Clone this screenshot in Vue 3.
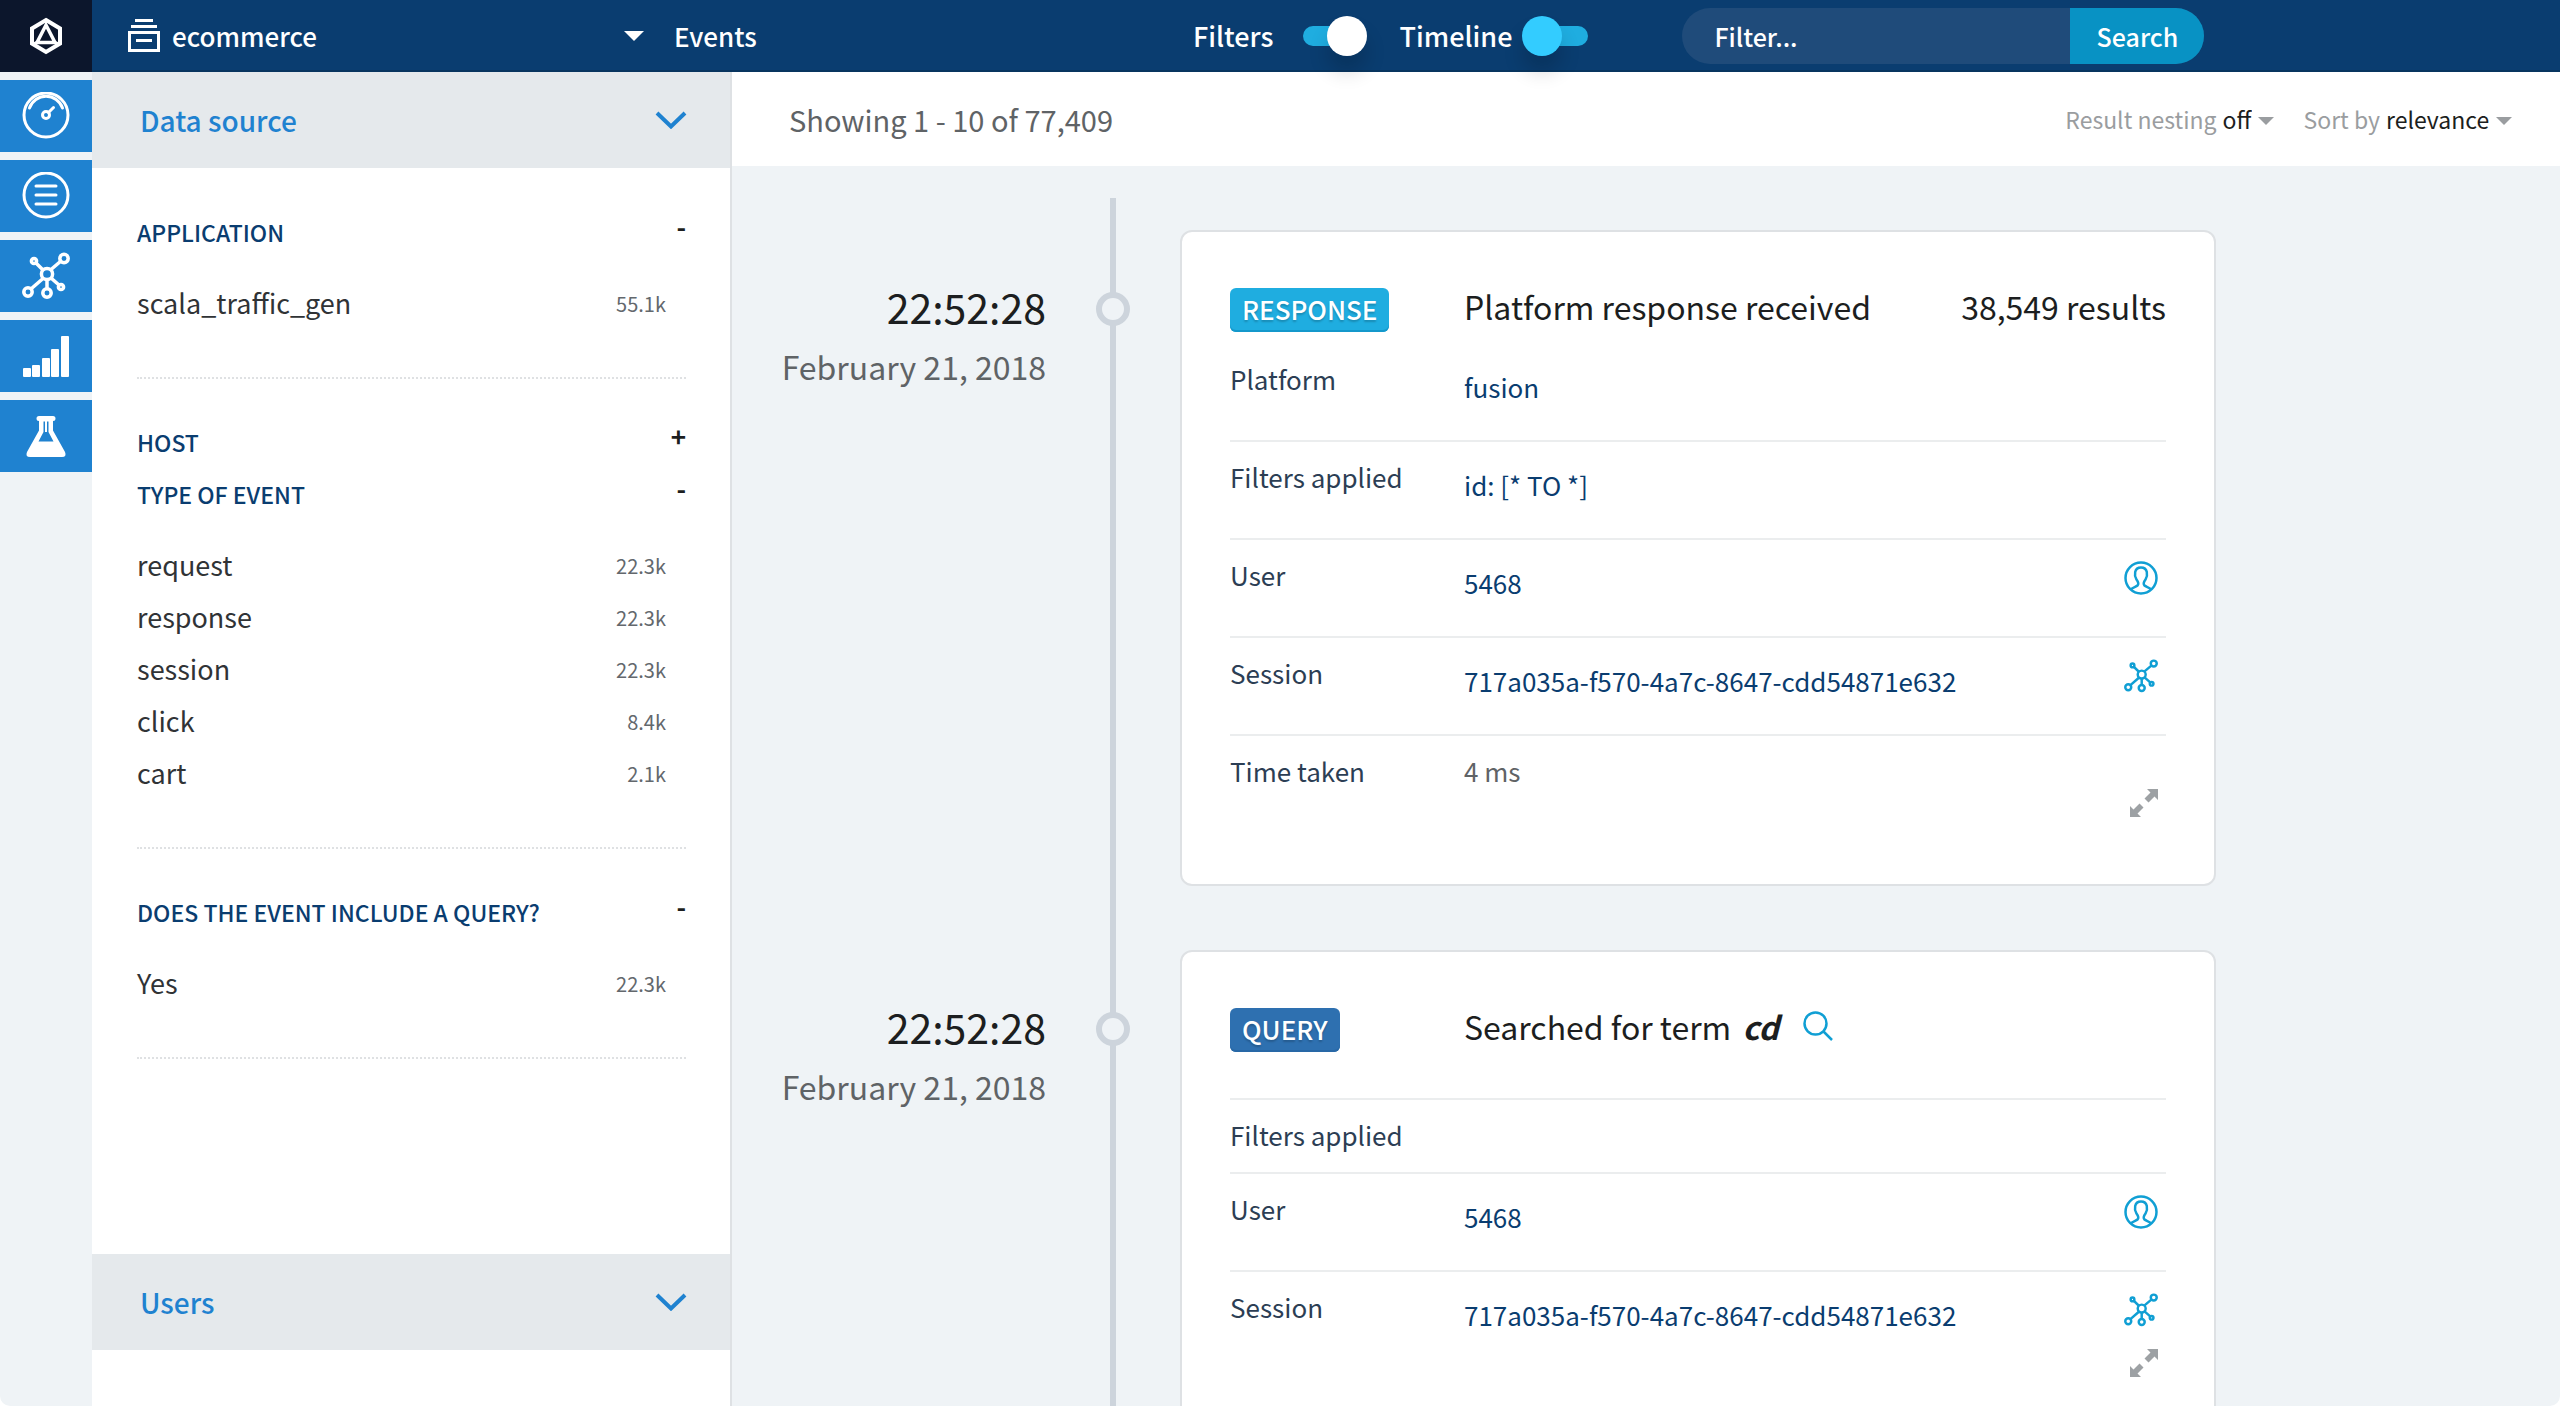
<script setup>
import { ref } from 'vue'

const showFilters = ref(true)
const showTimeline = ref(false)
const filterText = ref('')

const facetGroups = [
  {
    facets: [
      { name: 'Application', open: true, items: [{ label: 'scala_traffic_gen', count: '55.1k' }] },
    ],
  },
  {
    facets: [
      { name: 'Host', open: false, items: [] },
      {
        name: 'Type of event',
        open: true,
        items: [
          { label: 'request', count: '22.3k' },
          { label: 'response', count: '22.3k' },
          { label: 'session', count: '22.3k' },
          { label: 'click', count: '8.4k' },
          { label: 'cart', count: '2.1k' },
        ],
      },
    ],
  },
  {
    facets: [
      { name: 'Does the event include a query?', open: true, items: [{ label: 'Yes', count: '22.3k' }] },
    ],
  },
]

const session = '717a035a-f570-4a7c-8647-cdd54871e632'

const events = [
  {
    id: 1,
    kind: 'response',
    time: '22:52:28',
    date: 'February 21, 2018',
    title: 'Platform response received',
    results: '38,549 results',
    rows: [
      { label: 'Platform', link: 'fusion' },
      { label: 'Filters applied', link: 'id: [* TO *]' },
      { label: 'User', link: '5468', icon: 'user' },
      { label: 'Session', link: session, icon: 'graph' },
      { label: 'Time taken', text: '4 ms' },
    ],
  },
  {
    id: 2,
    kind: 'query',
    time: '22:52:28',
    date: 'February 21, 2018',
    title: 'Searched for term',
    term: 'cd',
    rows: [
      { label: 'Filters applied' },
      { label: 'User', link: '5468', icon: 'user' },
      { label: 'Session', link: session, icon: 'graph' },
    ],
  },
]
</script>

<template>
  <div class="shell">
    <svg class="defs" aria-hidden="true">
      <symbol id="graph" viewBox="0 2 48 48">
        <g fill="none" stroke="currentColor" stroke-width="3.500">
          <circle cx="25" cy="24" r="5.6" />
          <circle cx="12" cy="11" r="2.600" />
          <circle cx="42" cy="8.500" r="4.200" />
          <circle cx="6" cy="42" r="4.200" />
          <circle cx="25" cy="43" r="4.200" />
          <circle cx="39" cy="37" r="2.600" />
          <path d="M14 13l7 7M29 19.500l10-8.500M9.500 38.500L21 28.500M25 30v9M29 28l8 7" />
        </g>
      </symbol>
      <symbol id="chevron" viewBox="0 0 32 18">
        <path d="M2 2l14 13.500L30 2" fill="none" stroke="currentColor" stroke-width="4" />
      </symbol>
    </svg>

    <header class="topbar">
      <a class="logo" href="#" aria-label="Home">
        <svg width="36" height="40" viewBox="0 0 36 40" fill="none" stroke="#fff">
          <path d="M18 4l14 8.500v15L18 36 4 27.500v-15z" stroke-width="4" />
          <path d="M18 9l9 17.500H9z" stroke-width="3.500" />
          <path d="M18 4v6M9 26l-5 2M27 26l5 2" stroke-width="2" />
        </svg>
      </a>
      <button class="app-picker" type="button">
        <svg width="32" height="34" viewBox="0 0 32 34" aria-hidden="true">
          <path d="M7 0h18v3H7zM3 6h26v3H3z" fill="#fff" />
          <rect x="1.500" y="13.500" width="29" height="18" fill="none" stroke="#fff" stroke-width="3" />
          <path d="M8 20h16v3H8z" fill="#fff" />
        </svg>
        <span class="app-name">ecommerce</span>
        <svg width="20" height="10" viewBox="0 0 20 10" aria-hidden="true"><path d="M0 0h20L10 10z" fill="#fff" /></svg>
      </button>
      <h1 class="page-name">Events</h1>

      <label class="switch first">
        <span>Filters</span>
        <input v-model="showFilters" type="checkbox" />
        <span class="track"><span class="knob"></span></span>
      </label>
      <label class="switch">
        <span>Timeline</span>
        <input v-model="showTimeline" type="checkbox" />
        <span class="track"><span class="knob"></span></span>
      </label>

      <form class="search" @submit.prevent>
        <input v-model="filterText" type="text" placeholder="Filter..." aria-label="Filter" />
        <button type="submit">Search</button>
      </form>
    </header>

    <div class="body">
      <nav class="rail" aria-label="Sections">
        <a href="#" aria-label="Dashboard">
          <svg width="48" height="48" viewBox="0 1 48 48" fill="none" stroke="#fff" stroke-width="3" stroke-linecap="round">
            <circle cx="24" cy="24" r="22" />
            <path d="M7.500 17A17.500 17.500 0 0 1 40.500 17" />
            <circle cx="24" cy="24" r="3.500" />
            <path d="M26.500 21.500L31.500 16.500" />
          </svg>
        </a>
        <a href="#" aria-label="Events">
          <svg width="48" height="48" viewBox="0 1 48 48" fill="none" stroke="#fff" stroke-width="3" stroke-linecap="round">
            <circle cx="24" cy="24" r="22" />
            <path d="M14 15h20M14 24h20M14 33h20" />
          </svg>
        </a>
        <a href="#" aria-label="Sessions">
          <svg width="48" height="48"><use href="#graph" /></svg>
        </a>
        <a href="#" aria-label="Statistics">
          <svg width="48" height="48" viewBox="0 0 48 48" fill="#fff">
            <rect x="1" y="36" width="8" height="9" rx="1" />
            <rect x="10" y="33" width="8" height="12" rx="1" />
            <rect x="20" y="26" width="8" height="19" rx="1" />
            <rect x="29" y="17" width="8" height="28" rx="1" />
            <rect x="39" y="4" width="8" height="41" rx="1" />
          </svg>
        </a>
        <a href="#" aria-label="Experiments">
          <svg width="48" height="48" viewBox="0 0 48 48">
            <path d="M17 4h14a2.500 2.500 0 0 1 0 5v9.500l12 21.500q2 5-3 5H8q-5 0-3-5L17 18.500V9a2.500 2.500 0 0 1 0-5z" fill="#fff" />
            <path d="M21.500 9.500h5V20l5 9.500h-15l5-9.500z" fill="#1f82d0" />
            <path d="M24 9v11" stroke="#fff" stroke-width="2" />
          </svg>
        </a>
      </nav>

      <aside class="filters">
        <button class="section-head" type="button">
          Data source
          <svg width="32" height="18"><use href="#chevron" /></svg>
        </button>
        <div class="section-body">
          <div v-for="(group, g) in facetGroups" :key="g" class="facet-group">
            <section v-for="facet in group.facets" :key="facet.name" class="facet" :class="{ open: facet.open }">
              <button class="facet-head" type="button">
                <span class="facet-name">{{ facet.name }}</span>
                <span class="sign">{{ facet.open ? '-' : '+' }}</span>
              </button>
              <ul v-if="facet.open">
                <li v-for="item in facet.items" :key="item.label">
                  <a href="#">{{ item.label }}</a>
                  <span class="count">{{ item.count }}</span>
                </li>
              </ul>
            </section>
          </div>
        </div>
        <button class="section-head" type="button">
          Users
          <svg width="32" height="18"><use href="#chevron" /></svg>
        </button>
      </aside>

      <main class="results">
        <div class="results-head">
          <p class="showing">Showing 1 - 10 of 77,409</p>
          <label class="option">
            <span>Result nesting</span>
            <select><option>off</option></select>
            <svg width="16" height="12" viewBox="0 0 16 12" aria-hidden="true"><path d="M0 4h16l-8 8z" fill="#9a9da0" /></svg>
          </label>
          <label class="option">
            <span>Sort by</span>
            <select><option>relevance</option></select>
            <svg width="16" height="12" viewBox="0 0 16 12" aria-hidden="true"><path d="M0 4h16l-8 8z" fill="#9a9da0" /></svg>
          </label>
        </div>

        <div class="timeline">
          <div v-for="event in events" :key="event.id" class="entry">
            <div class="when">
              <div class="time">{{ event.time }}</div>
              <div class="date">{{ event.date }}</div>
            </div>
            <div class="marker"><span class="dot"></span></div>
            <article class="card">
              <header class="card-head" :class="event.kind">
                <div class="cell-label"><span class="badge">{{ event.kind }}</span></div>
                <h2>
                  {{ event.title }}
                  <em v-if="event.term">{{ event.term }}</em>
                </h2>
                <a v-if="event.term" class="lookup" href="#" aria-label="Search this term">
                  <svg width="30" height="30" viewBox="0 0 30 30" fill="none" stroke="currentColor" stroke-width="2.500">
                    <circle cx="12.500" cy="12.500" r="11" />
                    <path d="M20.500 20.500l8.500 8.500" />
                  </svg>
                </a>
                <span v-if="event.results" class="hits">{{ event.results }}</span>
              </header>
              <div v-for="row in event.rows" :key="row.label" class="row" :class="{ tall: row.link }">
                <div class="cell-label">{{ row.label }}</div>
                <a v-if="row.link" class="value" href="#">{{ row.link }}</a>
                <span v-else-if="row.text" class="plain">{{ row.text }}</span>
                <a v-if="row.icon === 'user'" class="row-icon" href="#" aria-label="User details">
                  <svg width="34" height="34" viewBox="0 0 34 34" fill="none" stroke="currentColor" stroke-width="2.500">
                    <circle cx="17" cy="17" r="15.500" />
                    <path d="M7 28.500c1-2 5-2.500 6.500-4s.500-4-1-6c-2.500-4-2.500-12 4.500-12s7 8 4.500 12c-1.500 2-2.500 4.500-1 6s5.500 2 6.500 4" />
                  </svg>
                </a>
                <a v-if="row.icon === 'graph'" class="row-icon" href="#" aria-label="Session graph">
                  <svg width="34" height="34"><use href="#graph" /></svg>
                </a>
              </div>
              <footer class="card-foot">
                <button type="button" aria-label="Expand">
                  <svg width="28" height="28" viewBox="0 0 28 28" fill="#9da1a4">
                    <path d="M17 0h11v11l-3.500-3.500-6 6-4-4 6-6z" />
                    <path d="M11 28H0V17l3.500 3.500 6-6 4 4-6 6z" />
                  </svg>
                </button>
              </footer>
            </article>
          </div>
        </div>
      </main>
    </div>
  </div>
</template>

<style>
body {
  margin: 0;
  background: #fff;
}
</style>

<style scoped>
* {
  box-sizing: border-box;
}
.shell {
  display: flex;
  flex-direction: column;
  height: 100vh;
  overflow: hidden;
  border-radius: 0 0 10px 10px;
  background: #eff3f6;
  color: #1c1e20;
  font-family: "Noto Sans CJK SC", "Noto Sans", sans-serif;
  font-size: 26px;
  line-height: 40px;
}
.defs {
  position: absolute;
  width: 0;
  height: 0;
}
button,
input,
select {
  margin: 0;
  padding: 0;
  border: 0;
  background: none;
  color: inherit;
  font: inherit;
}
button {
  cursor: pointer;
}
a {
  color: inherit;
  text-decoration: none;
}
h1,
h2,
p,
ul {
  margin: 0;
  padding: 0;
  list-style: none;
  font-size: inherit;
  font-weight: inherit;
}
svg {
  display: block;
  flex: none;
}

/* Top bar */
.topbar {
  position: relative;
  z-index: 1;
  display: flex;
  align-items: center;
  flex: none;
  height: 72px;
  background: #0a3d70;
  box-shadow: inset 0 -2px #08355f;
  color: #fff;
  font-weight: 500;
  line-height: 38px;
}
.logo {
  display: flex;
  align-items: center;
  justify-content: center;
  width: 92px;
  height: 72px;
  background: #0c162c;
}
.app-picker {
  display: flex;
  align-items: center;
  width: 552px;
  margin-left: 36px;
  padding-right: 36px;
}
.app-name {
  flex: 1;
  margin-left: 12px;
  text-align: left;
}
.page-name {
  width: 519px;
  margin-left: -6px;
}
.switch {
  display: flex;
  align-items: center;
  margin-left: 38px;
  font-size: 27px;
}
.switch.first {
  margin-left: 0;
}
.switch input {
  position: absolute;
  opacity: 0;
}
.track {
  display: flex;
  align-items: center;
  width: 58px;
  height: 20px;
  margin-left: 18px;
  border-radius: 10px;
  background: #1fade0;
}
.first .track {
  margin-left: 30px;
}
.knob {
  flex: none;
  width: 40px;
  height: 40px;
  margin-left: -8px;
  border-radius: 50%;
  background: #3cf;
  box-shadow: 0 16px 20px rgba(0, 0, 0, 0.16);
}
input:checked + .track .knob {
  margin-left: 24px;
  background: #fff;
}
.search {
  display: flex;
  width: 522px;
  height: 56px;
  margin-left: 94px;
  overflow: hidden;
  border-radius: 28px;
  background: #1f4b7a;
  font-size: 25px;
}
.search input {
  flex: 1;
  min-width: 0;
  padding-left: 32px;
  outline: 0;
}
.search input::placeholder {
  color: #fff;
  opacity: 1;
}
.search button {
  width: 134px;
  background: #0892c4;
}

/* Icon rail */
.body {
  display: flex;
  flex: 1;
  min-height: 0;
}
.rail {
  display: flex;
  flex-direction: column;
  flex: none;
  gap: 8px;
  width: 92px;
  padding-top: 8px;
}
.rail a {
  display: flex;
  align-items: center;
  justify-content: center;
  height: 72px;
  background: #1f82d0;
  color: #fff;
}

/* Filter column */
.filters {
  flex: none;
  width: 640px;
  overflow: hidden;
  border-right: 2px solid #dee1e4;
  background: #fff;
}
.section-head {
  display: flex;
  align-items: center;
  justify-content: space-between;
  width: 100%;
  height: 96px;
  padding: 0 43px 0 48px;
  background: #e5e9ec;
  color: #1f82d0;
  font-size: 28px;
  font-weight: 500;
}
.section-body {
  min-height: 1086px;
  padding: 44px 44px 0 45px;
}
.facet-group {
  padding-bottom: 48px;
  margin-bottom: 43px;
  border-bottom: 2px dotted #dfe1e3;
}
.facet-head {
  display: flex;
  justify-content: space-between;
  width: 100%;
  height: 52px;
  color: #0a3d70;
  font-size: 23px;
  font-weight: 500;
  line-height: 40px;
}
.facet-name {
  text-transform: uppercase;
}
.sign {
  color: #1c1e20;
  font-size: 26px;
  font-weight: 700;
  line-height: 28px;
}
.facet ul {
  padding-top: 13px;
}
.facet li {
  display: flex;
  align-items: center;
  justify-content: space-between;
  height: 52px;
  padding-right: 20px;
  color: #303336;
  font-size: 27px;
}
.count {
  padding-top: 2px;
  color: #63686d;
  font-size: 20px;
}

/* Results */
.results {
  flex: 1;
  min-width: 0;
  overflow: hidden;
}
.results-head {
  display: flex;
  align-items: center;
  height: 94px;
  padding: 0 48px 0 57px;
  background: #fff;
}
.showing {
  flex: 1;
  color: #5f6366;
  font-size: 29px;
}
.option {
  display: flex;
  align-items: center;
  gap: 6px;
  margin-left: 30px;
  color: #9a9da0;
  font-size: 23px;
}
.option select {
  appearance: none;
  color: #1c1e20;
}
.timeline {
  padding-top: 32px;
}
.entry {
  display: flex;
}
.when {
  flex: none;
  width: 314px;
  padding-top: 80px;
  text-align: right;
}
.time {
  font-size: 41px;
  line-height: 56px;
}
.date {
  color: #5f6366;
  font-size: 32px;
  line-height: 64px;
}
.marker {
  display: flex;
  flex: none;
  justify-content: center;
  width: 134px;
  padding-top: 94px;
  background: linear-gradient(#cdd4dc, #cdd4dc) center / 6px 100% no-repeat;
}
.dot {
  width: 34px;
  height: 34px;
  border: 6px solid #cdd4dc;
  border-radius: 50%;
  background: #eff3f6;
}
.card {
  flex: 0 1 1036px;
  min-width: 0;
  margin: 32px 0;
  padding: 0 48px;
  border: 2px solid #dee1e4;
  border-radius: 12px;
  background: #fff;
}
.card-head {
  display: flex;
  height: 110px;
  padding-top: 52px;
}
.card-head.query {
  height: 146px;
}
.cell-label {
  flex: none;
  width: 234px;
  color: #2c3e54;
}
.badge {
  display: inline-block;
  height: 44px;
  margin-top: 4px;
  padding: 0 12px;
  border-radius: 6px;
  background: #1fade0;
  box-shadow: inset 0 -2px #1498cb;
  color: #fff;
  font-weight: 500;
  line-height: 42px;
  text-shadow: 0 2px 2px rgba(0, 0, 0, 0.2);
  text-transform: uppercase;
}
.query .badge {
  background: #2e70b0;
  box-shadow: inset 0 -2px #2868a6;
}
.card-head h2,
.hits {
  font-size: 32px;
  line-height: 44px;
}
.card-head em {
  margin-left: 4px;
  font-weight: 700;
}
.lookup {
  margin: 7px 0 0 24px;
  color: #109fd4;
}
.hits {
  margin-left: auto;
}
.row {
  display: flex;
  min-height: 74px;
  padding-top: 15px;
  border-top: 2px solid #ebedee;
}
.card-head.response + .row {
  border-color: transparent;
}
.row.tall {
  min-height: 98px;
}
.value {
  margin-top: 8px;
  color: #0a3d70;
}
.plain {
  color: #5f6366;
}
.row-icon {
  margin: 6px 8px 0 auto;
  color: #109fd4;
}
.card-foot {
  display: flex;
  justify-content: flex-end;
  height: 76px;
  padding-right: 8px;
}
.card-foot button {
  height: 28px;
  margin-top: -19px;
}
</style>
